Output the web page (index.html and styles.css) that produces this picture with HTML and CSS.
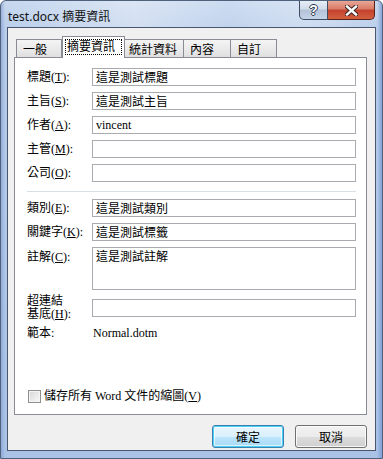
FILE: index.html
```html
<!DOCTYPE html>
<html lang="zh-Hant">
<head>
  <meta charset="UTF-8">
  <meta name="viewport" content="width=device-width, initial-scale=1.0">
  <title>test.docx 摘要資訊</title>
  <link rel="stylesheet" href="styles.css">
</head>
<body>
  <div class="window">
    <!-- 標題列 -->
    <div class="titlebar">
      <span class="title">test.docx 摘要資訊</span>
      <div class="caption-btns">
        <div class="cap-btn cap-help"><span>?</span></div>
        <div class="cap-btn cap-close">
          <svg width="13" height="11" viewBox="0 0 13 11">
            <path d="M2 1.5 L11 9.5 M11 1.5 L2 9.5" stroke="#3a2420" stroke-width="4.4" stroke-linecap="square"/>
            <path d="M2 1.5 L11 9.5 M11 1.5 L2 9.5" stroke="#fff" stroke-width="2.4" stroke-linecap="square"/>
          </svg>
        </div>
      </div>
    </div>

    <div class="client">
      <!-- 索引標籤 -->
      <div class="tabs">
        <div class="tab tab-w46">一般</div>
        <div class="tab tab-active"><span class="focus">摘要資訊</span></div>
        <div class="tab tab-w59">統計資料</div>
        <div class="tab tab-w47">內容</div>
        <div class="tab tab-w46">自訂</div>
      </div>

      <div class="panel">
        <div class="form">
          <label>標題(<u>T</u>):</label>
          <input class="field" value="這是測試標題">
          <label>主旨(<u>S</u>):</label>
          <input class="field" value="這是測試主旨">
          <label>作者(<u>A</u>):</label>
          <input class="field" value="vincent">
          <label>主管(<u>M</u>):</label>
          <input class="field" value="">
          <label>公司(<u>O</u>):</label>
          <input class="field" value="">

          <div class="sep"></div>

          <label>類別(<u>E</u>):</label>
          <input class="field" value="這是測試類別">
          <label>關鍵字(<u>K</u>):</label>
          <input class="field" value="這是測試標籤">
          <label class="top">註解(<u>C</u>):</label>
          <textarea class="field area">這是測試註解</textarea>
          <label class="two-line">超連結<br>基底(<u>H</u>):</label>
          <input class="field" value="">
          <span class="plain">範本:</span>
          <span class="plain value">Normal.dotm</span>
        </div>

        <label class="check"><span class="box"></span>儲存所有 Word 文件的縮圖(<u>V</u>)</label>
      </div>

      <div class="buttons">
        <button class="btn btn-default">確定</button>
        <button class="btn">取消</button>
      </div>
    </div>
  </div>
</body>
</html>
```

FILE: styles.css
```css
/* --- 全體 --- */
body {
  margin: 0;
  background: #fff;
  font-family: "Liberation Serif", "Noto Sans CJK TC", serif;
  font-size: 12px;
  color: #000;
}
/* --- 視窗外框（Aero 風） --- */
.window {
  box-sizing: border-box;
  width: 383px;
  height: 459px;
  display: flex;
  flex-direction: column;
  border: 1px solid #50617c;
  border-radius: 6px 6px 0 0;
  background:
    linear-gradient(90deg, rgba(120,150,205,0.55) 0, rgba(255,255,255,0) 4px, rgba(255,255,255,0) calc(100% - 5px), rgba(110,145,205,0.7) 100%),
    linear-gradient(180deg, #c7d8ef 0, #b8cdea 30px, #a9c2e6 100%);
}
/* --- 標題列 --- */
.titlebar {
  height: 26px;
  display: flex;
  justify-content: space-between;
  align-items: flex-start;
  padding: 0 7px;
  background: linear-gradient(90deg, rgba(255,255,255,0) 0, rgba(255,255,255,0.35) 35%, rgba(255,255,255,0.1) 60%, rgba(255,255,255,0.3) 80%, rgba(255,255,255,0) 100%);
}
.title {
  font-family: "Noto Sans", "Noto Sans CJK TC", sans-serif;
  font-size: 12px;
  line-height: 14px;
  padding-top: 9px;
  color: #111;
}
.caption-btns {
  display: flex;
}
.cap-btn {
  height: 18px;
  display: flex;
  align-items: center;
  justify-content: center;
  border: 1px solid #3f4c63;
  border-top: none;
}
.cap-help {
  width: 27px;
  border-radius: 0 0 0 5px;
  background: linear-gradient(180deg, #e6edf6 0, #d0dbe9 45%, #b3c2d8 50%, #c4d3e6 100%);
}
.cap-help span {
  font-family: "Liberation Sans", sans-serif;
  font-weight: bold;
  font-size: 14px;
  line-height: 14px;
  color: #fff;
  text-shadow: 1px 0 #2c384c, -1px 0 #2c384c, 0 1px #2c384c, 0 -1px #2c384c;
}
.cap-close {
  width: 46px;
  border-left: none;
  border-color: #5b2219;
  border-radius: 0 0 5px 0;
  background: linear-gradient(180deg, #e9a595 0, #d97a66 45%, #c4412d 50%, #d2603f 100%);
}
/* --- 用戶區域 --- */
.client {
  flex: 1;
  margin: 0 6px 7px;
  border: 1px solid #4a5670;
  background: #f0f0f0;
  padding: 8px 8px 2px 6px;
  display: flex;
  flex-direction: column;
}
/* --- 索引標籤 --- */
.tabs {
  height: 22px;
  margin-bottom: -1px;
  padding-left: 2px;
  display: flex;
  align-items: flex-end;
}
.tab {
  box-sizing: border-box;
  height: 19px;
  padding: 3px 0 0 6px;
  line-height: 14px;
  border: 1px solid #898c95;
  border-bottom: none;
  border-left: none;
  background: linear-gradient(180deg, #f4f4f4 0, #eaeaea 50%, #dedede 100%);
}
.tab:first-child {
  border-left: 1px solid #898c95;
}
.tab-w46 { width: 46px; }
.tab-w47 { width: 47px; }
.tab-w59 { width: 59px; padding-left: 4px; }
.tab-active {
  position: relative;
  z-index: 1;
  width: 63px;
  height: 22px;
  padding: 2px 0 0 2px;
  border-left: 1px solid #898c95;
  background: #fff;
}
.focus {
  display: inline-block;
  padding: 0 6px 0 1px;
  line-height: 14px;
  border: 1px dotted #000;
}
/* --- 內容面板 --- */
.panel {
  flex: 1;
  display: flex;
  flex-direction: column;
  border: 1px solid #898c95;
  background: #fff;
  padding: 10px 11px 11px 12px;
}
.form {
  display: grid;
  grid-template-columns: 65px 264px;
  row-gap: 6px;
  align-items: center;
}
.form label, .plain {
  line-height: 14px;
  white-space: nowrap;
}
.form .top {
  align-self: start;
  padding-top: 3px;
}
.form .two-line {
  line-height: 13px;
  margin: -1px 0;
}
.value {
  padding-left: 1px;
}
.field {
  box-sizing: border-box;
  height: 18px;
  margin: 0;
  padding: 0 3px;
  border: 1px solid #a9abb1;
  font: inherit;
  color: #000;
  background: #fff;
  outline: none;
}
.area {
  height: 43px;
  padding: 2px 3px;
  line-height: 14px;
  resize: none;
  overflow: hidden;
}
.sep {
  grid-column: 1 / -1;
  height: 1px;
  margin: 3px 0 1px;
  background: #d5dfe5;
}
/* --- 核取方塊 --- */
.check {
  margin-top: auto;
  display: flex;
  align-items: center;
  line-height: 14px;
}
.box {
  box-sizing: border-box;
  width: 13px;
  height: 13px;
  margin: 0 3px 0 1px;
  border: 1px solid #8f8f8f;
  box-shadow: inset 0 0 0 1px #f4f4f4;
  background: linear-gradient(135deg, #d6d6d6 0, #ececec 60%, #f8f8f8 100%);
}
/* --- 按鈕 --- */
.buttons {
  display: flex;
  justify-content: flex-end;
  gap: 11px;
  margin-top: 10px;
}
.btn {
  box-sizing: border-box;
  width: 72px;
  height: 23px;
  padding: 0;
  border: 1px solid #707070;
  border-radius: 3px;
  font: inherit;
  color: #000;
  box-shadow: inset 0 0 0 1px rgba(255,255,255,0.8);
  background: linear-gradient(180deg, #f2f2f2 0, #ebebeb 50%, #dddddd 51%, #cfcfcf 100%);
}
.btn-default {
  border-color: #3c7fb1;
  box-shadow: inset 0 0 0 1px #48d0f5, inset 0 0 0 2px rgba(255,255,255,0.6);
  background: linear-gradient(180deg, #eaf6fd 0, #d9f0fc 50%, #bee6fd 51%, #a7d9f5 100%);
}
```
